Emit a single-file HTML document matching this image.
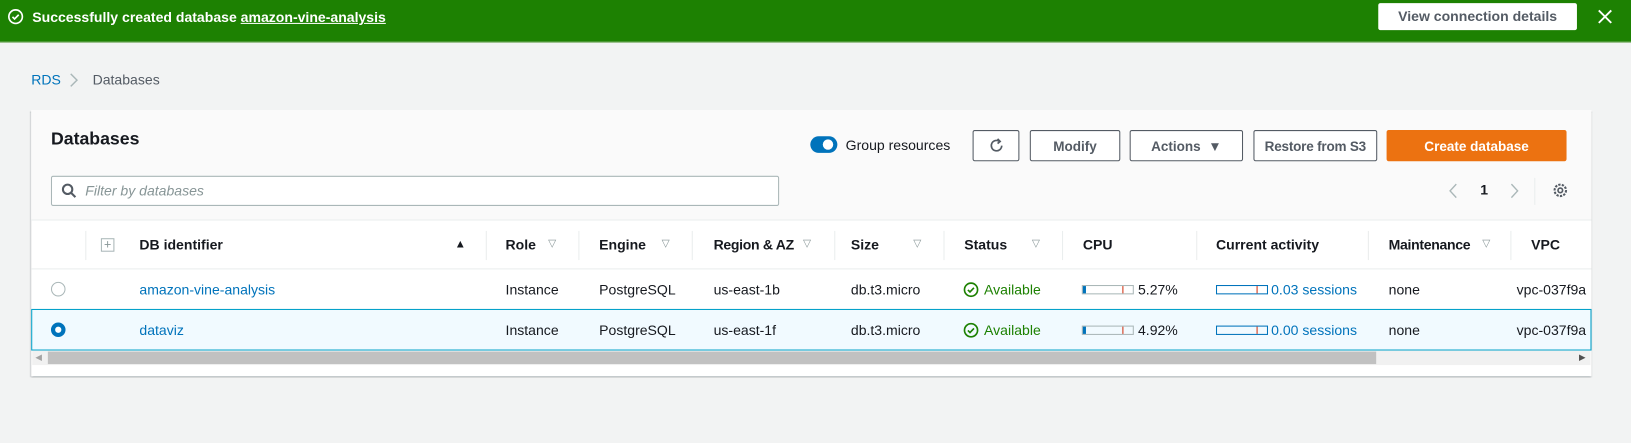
<!DOCTYPE html>
<html><head><meta charset="utf-8"><style>
*{box-sizing:border-box;margin:0;padding:0}
html,body{width:1631px;height:443px;overflow:hidden;background:#f2f3f3}
#w{position:absolute;left:0;top:0;width:1568px;height:426px;transform:scale(1.0402);transform-origin:0 0;font-family:"Liberation Sans",sans-serif;font-size:13.5px;color:#16191f}
.a{position:absolute;white-space:nowrap}
.btn{position:absolute;height:30px;border:1px solid #545b64;background:#fff;border-radius:2px;font-weight:bold;color:#545b64;font-size:13px;display:flex;align-items:center;justify-content:center;white-space:nowrap}
.hd{position:absolute;top:228px;font-weight:bold;font-size:13.5px}
.dv{position:absolute;top:222px;width:1px;height:28px;background:#eaeded}
.tri{position:absolute;top:229px;color:#879596;font-size:10px}
.c{position:absolute;font-size:13.5px;white-space:nowrap}
.link{color:#0073bb}
</style></head><body><div id="w">
<div class="a" style="left:0;top:0;width:1568px;height:41px;background:#1d8102;border-bottom:1px solid #8fb97f"></div>
<svg class="a" style="left:7px;top:8px" width="16" height="16" viewBox="0 0 16 16"><circle cx="8" cy="8" r="6.5" fill="none" stroke="#fff" stroke-width="1.6"/><path d="M5 8.2l2 2 4-4" fill="none" stroke="#fff" stroke-width="1.6"/></svg>
<div class="a" style="left:31px;top:9px;color:#fff;font-weight:bold;font-size:13.5px">Successfully created database <u>amazon-vine-analysis</u></div>
<div class="a" style="left:1325px;top:3px;width:191px;height:26px;background:#fff;border-radius:2px;color:#545b64;font-weight:bold;font-size:13.5px;text-align:center;line-height:26px">View connection details</div>
<svg class="a" style="left:1536px;top:9px" width="14" height="14" viewBox="0 0 14 14"><path d="M1 1l12 12M13 1L1 13" stroke="#fff" stroke-width="1.8"/></svg>

<div class="a link" style="left:30px;top:69px">RDS</div>
<svg class="a" style="left:67px;top:70px" width="8" height="14" viewBox="0 0 8 14"><path d="M1 1l6 6-6 6" fill="none" stroke="#aab7b8" stroke-width="1.4"/></svg>
<div class="a" style="left:89px;top:69px;color:#545b64">Databases</div>

<div class="a" style="left:30px;top:106px;width:1500px;height:256px;background:#fff;box-shadow:0 1px 1px rgba(0,28,36,.3),1px 1px 1px rgba(0,28,36,.15),-1px 1px 1px rgba(0,28,36,.15)"></div>
<div class="a" style="left:30px;top:106px;width:1500px;height:106px;background:#fafafa;border-bottom:1px solid #eaeded"></div>
<div class="a" style="left:49px;top:124px;font-size:17px;font-weight:bold">Databases</div>

<div class="a" style="left:779px;top:131px;width:26px;height:16px;border-radius:8px;background:#0073bb"></div>
<div class="a" style="left:791px;top:134px;width:10px;height:10px;border-radius:5px;background:#fff"></div>
<div class="a" style="left:813px;top:132px;color:#16191f">Group resources</div>
<div class="btn" style="left:935px;top:125px;width:45px"><svg width="16" height="16" viewBox="0 0 16 16"><path d="M13 8a5 5 0 1 1-2-4" fill="none" stroke="#545b64" stroke-width="1.6"/><path d="M9 1.5l2.5 2.5-2.5 2" fill="none" stroke="#545b64" stroke-width="1.6"/></svg></div>
<div class="btn" style="left:990px;top:125px;width:87px">Modify</div>
<div class="btn" style="left:1086px;top:125px;width:109px">Actions&nbsp;&nbsp;▼</div>
<div class="btn" style="left:1205px;top:125px;width:119px;letter-spacing:-0.2px">Restore from S3</div>
<div class="btn" style="left:1333px;top:125px;width:173px;background:#ec7211;border-color:#ec7211;color:#fff">Create database</div>

<div class="a" style="left:49px;top:169px;width:700px;height:29px;border:1px solid #aab7b8;border-radius:2px;background:#fff"></div>
<svg class="a" style="left:59px;top:176px" width="15" height="15" viewBox="0 0 15 15"><circle cx="6" cy="6" r="4.5" fill="none" stroke="#545b64" stroke-width="2"/><path d="M9.5 9.5l4 4" stroke="#545b64" stroke-width="2"/></svg>
<div class="a" style="left:82px;top:176px;color:#879596;font-style:italic">Filter by databases</div>
<svg class="a" style="left:1393px;top:176px" width="8" height="15" viewBox="0 0 8 15"><path d="M7 1L1 7.5 7 14" fill="none" stroke="#aab7b8" stroke-width="1.3"/></svg>
<div class="a" style="left:1423px;top:175px;font-weight:bold">1</div>
<svg class="a" style="left:1452px;top:176px" width="8" height="15" viewBox="0 0 8 15"><path d="M1 1l6 6.5L1 14" fill="none" stroke="#aab7b8" stroke-width="1.3"/></svg>
<div class="a" style="left:1475px;top:171px;width:1px;height:26px;background:#eaeded"></div>
<svg class="a" style="left:1492px;top:175px" width="16" height="16" viewBox="0 0 16 16"><circle cx="8" cy="8" r="5.5" fill="none" stroke="#545b64" stroke-width="2" stroke-dasharray="2.2 1.2"/><circle cx="8" cy="8" r="2.2" fill="none" stroke="#545b64" stroke-width="1.6"/></svg>

<div class="a" style="left:30px;top:258px;width:1500px;height:1px;background:#eaeded"></div>
<div class="dv" style="left:82px"></div><div class="dv" style="left:467px"></div><div class="dv" style="left:556px"></div><div class="dv" style="left:665px"></div><div class="dv" style="left:802px"></div><div class="dv" style="left:907px"></div><div class="dv" style="left:1021px"></div><div class="dv" style="left:1150px"></div><div class="dv" style="left:1315px"></div><div class="dv" style="left:1452px"></div>
<div class="a" style="left:97px;top:229px;width:13px;height:13px;border:1px solid #aab7b8;color:#879596;font-size:12px;line-height:10px;text-align:center">+</div>
<div class="hd" style="left:134px">DB identifier</div><div class="a" style="left:437px;top:229px;font-size:11px">▲</div>
<div class="hd" style="left:486px">Role</div><div class="tri" style="left:527px">▽</div>
<div class="hd" style="left:576px">Engine</div><div class="tri" style="left:636px">▽</div>
<div class="hd" style="left:686px;letter-spacing:-0.3px">Region &amp; AZ</div><div class="tri" style="left:772px">▽</div>
<div class="hd" style="left:818px">Size</div><div class="tri" style="left:878px">▽</div>
<div class="hd" style="left:927px">Status</div><div class="tri" style="left:992px">▽</div>
<div class="hd" style="left:1041px">CPU</div>
<div class="hd" style="left:1169px">Current activity</div>
<div class="hd" style="left:1335px;letter-spacing:-0.3px">Maintenance</div><div class="tri" style="left:1425px">▽</div>
<div class="hd" style="left:1472px">VPC</div>

<div class="a" style="left:30px;top:297px;width:1500px;height:1px;background:#eaeded"></div>
<div class="a" style="left:30px;top:297px;width:1500px;height:40px;background:#f1faff;border:1px solid #00a1c9"></div>

<div class="a" style="left:49px;top:271px;width:14px;height:14px;border-radius:7px;border:1px solid #aab7b8;background:#fff"></div>
<div class="a" style="left:49px;top:310px;width:14px;height:14px;border-radius:7px;border:4px solid #0073bb;background:#fff"></div>

<div class="c link" style="left:134px;top:271px">amazon-vine-analysis</div>
<div class="c link" style="left:134px;top:310px">dataviz</div>
<div class="c" style="left:486px;top:271px">Instance</div><div class="c" style="left:486px;top:310px">Instance</div>
<div class="c" style="left:576px;top:271px">PostgreSQL</div><div class="c" style="left:576px;top:310px">PostgreSQL</div>
<div class="c" style="left:686px;top:271px">us-east-1b</div><div class="c" style="left:686px;top:310px">us-east-1f</div>
<div class="c" style="left:818px;top:271px">db.t3.micro</div><div class="c" style="left:818px;top:310px">db.t3.micro</div>
<svg class="a" style="left:926px;top:271px" width="15" height="15" viewBox="0 0 15 15"><circle cx="7.5" cy="7.5" r="6.3" fill="none" stroke="#1d8102" stroke-width="1.6"/><path d="M4.5 7.7l2 2 3.8-4" fill="none" stroke="#1d8102" stroke-width="1.6"/></svg>
<svg class="a" style="left:926px;top:310px" width="15" height="15" viewBox="0 0 15 15"><circle cx="7.5" cy="7.5" r="6.3" fill="none" stroke="#1d8102" stroke-width="1.6"/><path d="M4.5 7.7l2 2 3.8-4" fill="none" stroke="#1d8102" stroke-width="1.6"/></svg>
<div class="c" style="left:946px;top:271px;color:#1d8102">Available</div><div class="c" style="left:946px;top:310px;color:#1d8102">Available</div>

<div class="a" style="left:1040px;top:274px;width:50px;height:9px;border:1px solid #aab7b8"></div><div class="a" style="left:1041px;top:275px;width:3px;height:7px;background:#0073bb"></div><div class="a" style="left:1079px;top:275px;width:1px;height:7px;background:#d13212"></div>
<div class="c" style="left:1094px;top:271px">5.27%</div>
<div class="a" style="left:1040px;top:313px;width:50px;height:9px;border:1px solid #aab7b8"></div><div class="a" style="left:1041px;top:314px;width:3px;height:7px;background:#0073bb"></div><div class="a" style="left:1079px;top:314px;width:1px;height:7px;background:#d13212"></div>
<div class="c" style="left:1094px;top:310px">4.92%</div>

<div class="a" style="left:1169px;top:274px;width:50px;height:9px;border:1px solid #0073bb"></div><div class="a" style="left:1208px;top:275px;width:1px;height:7px;background:#d13212"></div>
<div class="c link" style="left:1222px;top:271px">0.03 sessions</div>
<div class="a" style="left:1169px;top:313px;width:50px;height:9px;border:1px solid #0073bb"></div><div class="a" style="left:1208px;top:314px;width:1px;height:7px;background:#d13212"></div>
<div class="c link" style="left:1222px;top:310px">0.00 sessions</div>
<div class="c" style="left:1335px;top:271px">none</div><div class="c" style="left:1335px;top:310px">none</div>
<div class="a" style="left:1456px;top:260px;width:72px;height:76px;overflow:hidden"><div class="c" style="left:2px;top:11px">vpc-037f9a</div><div class="c" style="left:2px;top:50px">vpc-037f9a</div></div>

<div class="a" style="left:31px;top:337px;width:1498px;height:14px;background:#f1f1f1"></div>
<div class="a" style="left:46px;top:338px;width:1277px;height:12px;background:#c1c1c1"></div>
<div class="a" style="left:34px;top:339px;font-size:8px;color:#a3a3a3">◀</div>
<div class="a" style="left:1518px;top:339px;font-size:8px;color:#505050">▶</div>
</div></body></html>
